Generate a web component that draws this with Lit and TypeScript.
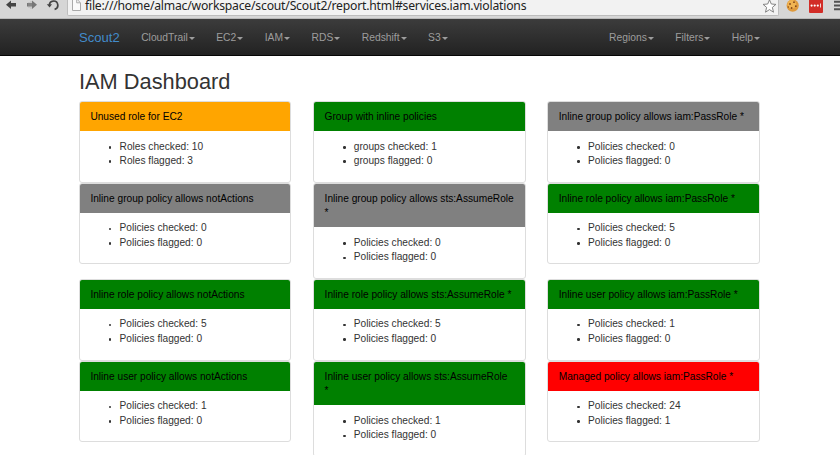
import { LitElement, html, css } from "lit";
import { customElement } from "lit/decorators.js";
import { classMap } from "lit/directives/class-map.js";

interface Finding {
  title: string;
  unit: string;
  checked: number;
  flagged: number;
  level: "good" | "warning" | "danger" | "none";
}

const findings: Finding[] = [
  { title: "Unused role for EC2", unit: "Roles", checked: 10, flagged: 3, level: "warning" },
  { title: "Group with inline policies", unit: "groups", checked: 1, flagged: 0, level: "good" },
  { title: "Inline group policy allows iam:PassRole *", unit: "Policies", checked: 0, flagged: 0, level: "none" },
  { title: "Inline group policy allows notActions", unit: "Policies", checked: 0, flagged: 0, level: "none" },
  { title: "Inline group policy allows sts:AssumeRole\n*", unit: "Policies", checked: 0, flagged: 0, level: "none" },
  { title: "Inline role policy allows iam:PassRole *", unit: "Policies", checked: 5, flagged: 0, level: "good" },
  { title: "Inline role policy allows notActions", unit: "Policies", checked: 5, flagged: 0, level: "good" },
  { title: "Inline role policy allows sts:AssumeRole *", unit: "Policies", checked: 5, flagged: 0, level: "good" },
  { title: "Inline user policy allows iam:PassRole *", unit: "Policies", checked: 1, flagged: 0, level: "good" },
  { title: "Inline user policy allows notActions", unit: "Policies", checked: 1, flagged: 0, level: "good" },
  { title: "Inline user policy allows sts:AssumeRole\n*", unit: "Policies", checked: 1, flagged: 0, level: "good" },
  { title: "Managed policy allows iam:PassRole *", unit: "Policies", checked: 24, flagged: 1, level: "danger" },
];

@customElement("browser-bar")
class BrowserBar extends LitElement {
  static styles = css`
    :host { display: flex; height: 19px; box-sizing: border-box; background: #d6d6d6; border-bottom: 1px solid #b9b9b9; }
    .tools { width: 67px; height: 18px; flex: none; }
    .field { width: 712px; height: 16px; box-sizing: border-box; flex: none; display: flex; background: #f2f2f2; border: solid #bdbdbd; border-width: 0 1px 1px; border-radius: 0 0 2px 2px; }
    .page { width: 17px; height: 14px; flex: none; }
    .url { flex: 1; font: 12.2px/12px "Noto Sans", "Open Sans", sans-serif; letter-spacing: -0.21px; color: #222; white-space: nowrap; }
    .star { width: 18px; height: 14px; flex: none; }
    .ext { width: 61px; height: 18px; flex: none; }
    svg { display: block; }
  `;
  render() {
    return html`
      <svg class="tools" viewBox="0 0 67 18">
        <path d="M6 4.7 11 .5V3h5v3.6h-5V9z" fill="#444"/>
        <path d="M37 4.7 32 .5V3h-5v3.6h5V9z" fill="#777"/>
        <path d="M29 2v6M31 1v8" stroke="#aaa" stroke-width=".6"/>
        <path d="M49.4 5.3A4.2 4.2 0 1 1 54.6 9.3" fill="none" stroke="#444" stroke-width="1.7"/>
        <path d="M46.8 4.2h5.2l-2.4 3.4z" fill="#444"/>
      </svg>
      <div class="field">
        <svg class="page" viewBox="68 0 17 14">
          <path d="M72.5-1h4.2l3.8 3.8v7.7h-8z" fill="#fafafa" stroke="#aaa"/>
          <path d="M76.7-.5v3.3h3.6" fill="none" stroke="#aaa"/>
        </svg>
        <div class="url">file:///home/almac/workspace/scout/Scout2/report.html#services.iam.violations</div>
        <svg class="star" viewBox="760 0 18 14">
          <path d="m769.5 -.2 1.8 4.2 4.6.4-3.5 3 1.1 4.8-4-2.6-4 2.6 1.1-4.8-3.5-3 4.6-.4z" fill="#fff" stroke="#777" stroke-width=".9"/>
        </svg>
      </div>
      <svg class="ext" viewBox="779 0 61 18">
        <circle cx="792.7" cy="5.6" r="6.1" fill="#df9a3c"/>
        <circle cx="791.8" cy="4.3" r="4.3" fill="#f0b452"/>
        <g fill="#854718"><circle cx="790" cy="4" r=".9"/><circle cx="794" cy="2.2" r=".9"/><circle cx="795.8" cy="6.2" r=".9"/><circle cx="791.6" cy="8" r=".9"/><circle cx="788.3" cy="7" r=".7"/></g>
        <rect x="809" y="-2" width="14" height="15" rx="1" fill="#d22d27"/>
        <g fill="#fff"><circle cx="811.6" cy="5.6" r="1.1"/><circle cx="814.7" cy="5.6" r="1.1"/><circle cx="817.8" cy="5.6" r="1.1"/><path d="M820 3.6h.8v4h-.8z"/></g>
        <path d="M834 1.8h7M834 5.5h7M834 9.2h7" stroke="#505050" stroke-width="2"/>
      </svg>
    `;
  }
}

@customElement("nav-bar")
class NavBar extends LitElement {
  static styles = css`
    :host { display: flex; height: 37px; box-sizing: border-box; padding: 2px 80px 0 79px; align-items: center; background: linear-gradient(#3c3c3c, #222); border-bottom: 1px solid #060606; font: 10.3px/14.5px "Liberation Sans", Arial, sans-serif; color: #9d9d9d; }
    .brand { font-size: 13.07px; color: #428bca; margin-right: 21.5px; }
    .item { display: flex; align-items: center; white-space: nowrap; margin-right: 21.5px; }
    .item::after { content: ""; border: 3px solid transparent; border-top-color: currentColor; border-bottom: 0; margin-left: 1px; }
    .right { display: flex; margin-left: auto; }
    .right .item:last-child { margin-right: 0; }
  `;
  render() {
    const item = (label: string) => html`<span class="item">${label}</span>`;
    return html`
      <span class="brand">Scout2</span>
      ${["CloudTrail", "EC2", "IAM", "RDS", "Redshift", "S3"].map(item)}
      <div class="right">${["Regions", "Filters", "Help"].map(item)}</div>
    `;
  }
}

@customElement("app-root")
class AppRoot extends LitElement {
  static styles = css`
    :host { display: block; height: 455px; overflow: hidden; background: #fff; font: 10.17px/14.5px "Liberation Sans", Arial, sans-serif; color: #333; }
    main { padding: 14px 80px 0 79px; }
    h1 { margin: 0 0 7px; font-size: 21.8px; line-height: 24px; font-weight: 500; color: #333; }
    .grid { display: grid; grid-template-columns: repeat(3, 212.4px); column-gap: 21.8px; align-items: start; }
    .card { box-sizing: border-box; border: 1px solid #ddd; border-radius: 3px; overflow: hidden; padding-bottom: 13.2px; }
    .head { padding: 8px 9px 6.5px 10.4px; color: #000; white-space: pre-line; }
    .warning .head { background: orange; }
    .good .head { background: green; }
    .none .head { background: gray; }
    .danger .head { background: red; }
    ul { margin: 0; padding: 8.5px 0 0 28.8px; list-style: none; }
    li { display: flex; align-items: center; gap: 8.2px; }
    li::before { content: ""; width: 2.6px; height: 2.6px; border-radius: 50%; background: #333; margin-top: 1px; }
  `;
  render() {
    return html`
      <browser-bar></browser-bar>
      <nav-bar></nav-bar>
      <main>
        <h1>IAM Dashboard</h1>
        <div class="grid">
          ${findings.map((f) => html`
            <section class=${classMap({ card: true, [f.level]: true })}>
              <div class="head">${f.title}</div>
              <ul>
                <li><span>${f.unit} checked: ${f.checked}</span></li>
                <li><span>${f.unit} flagged: ${f.flagged}</span></li>
              </ul>
            </section>`)}
        </div>
      </main>
    `;
  }
}
